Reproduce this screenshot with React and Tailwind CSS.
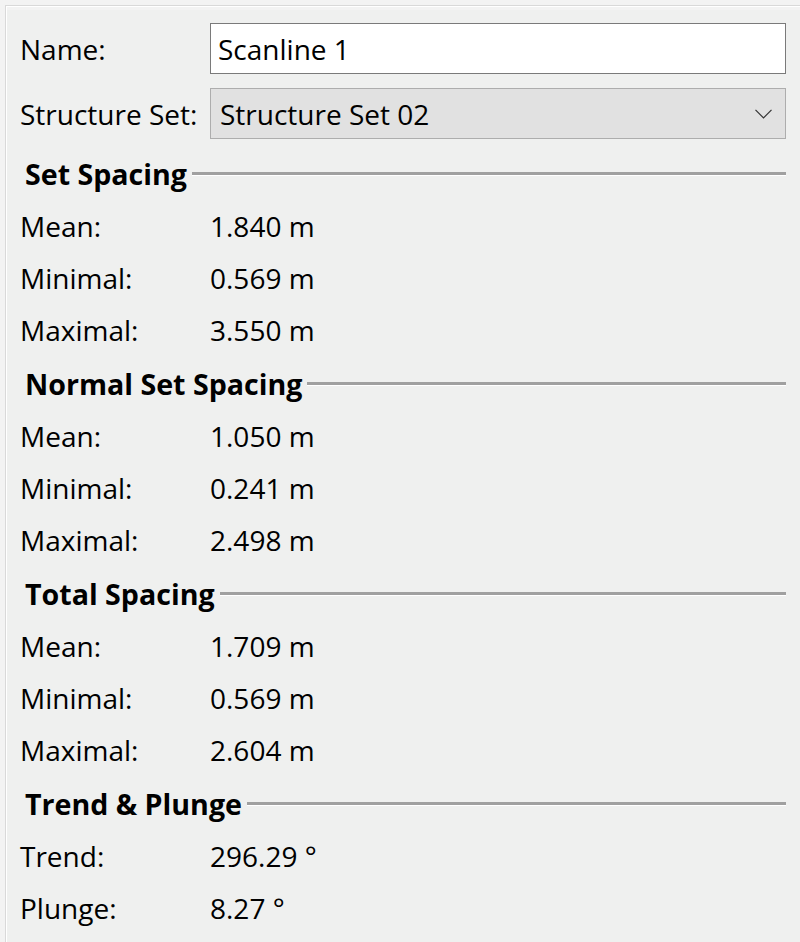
import React from 'react';

const sections = [
  {
    title: 'Set Spacing',
    rows: [
      ['Mean:', '1.840 m'],
      ['Minimal:', '0.569 m'],
      ['Maximal:', '3.550 m'],
    ],
  },
  {
    title: 'Normal Set Spacing',
    rows: [
      ['Mean:', '1.050 m'],
      ['Minimal:', '0.241 m'],
      ['Maximal:', '2.498 m'],
    ],
  },
  {
    title: 'Total Spacing',
    rows: [
      ['Mean:', '1.709 m'],
      ['Minimal:', '0.569 m'],
      ['Maximal:', '2.604 m'],
    ],
  },
  {
    title: 'Trend & Plunge',
    rows: [
      ['Trend:', '296.29 °'],
      ['Plunge:', '8.27 °'],
    ],
  },
];

function Header({ title }) {
  return (
    <div className="flex h-[54px] items-center pb-[2px]">
      <span className="ml-[5px] whitespace-nowrap text-[28.6px] font-bold">{title}</span>
      <div className="ml-[5px] flex flex-1 flex-col">
        <div className="h-[3px] bg-[#a0a0a0]" />
        <div className="h-px bg-white" />
      </div>
    </div>
  );
}

function Row({ label, value }) {
  return (
    <div className="flex h-[52px] items-center pb-[4px]">
      <span className="w-[190px] shrink-0">{label}</span>
      <span>{value}</span>
    </div>
  );
}

export default function App() {
  return (
    <div
      className="h-[942px] w-[800px] overflow-hidden bg-[#f3f3f3] pl-[5px] pt-[5px] text-[28px] leading-none text-black"
      style={{ fontFamily: '"Open Sans", "Noto Sans", sans-serif' }}
    >
      <div className="h-full border-l border-t border-[#d9d9d9]">
        <div className="flex h-full flex-col border-l border-t border-white pt-[3px]">
          <div className="flex-1 bg-[#eff0ef] pl-[13px] pr-[14px] pt-[13px]">
            <div className="flex h-[51px] items-center">
              <span className="w-[190px] shrink-0">Name:</span>
              <div className="flex h-full flex-1 items-center border border-[#7a7a7a] bg-white pl-[7px]">
                Scanline 1
              </div>
            </div>

            <div className="mt-[14px] flex h-[51px] items-center">
              <span className="w-[190px] shrink-0">Structure Set:</span>
              <div className="flex h-full flex-1 items-center justify-between border border-[#adadad] bg-[#e1e1e1] pl-[9px] pr-[13px]">
                <span>Structure Set 02</span>
                <svg width="17" height="10" viewBox="0 0 17 10" fill="none">
                  <path d="M0.5 0.8 L8.5 8.8 L16.5 0.8" stroke="#333" strokeWidth="1.2" />
                </svg>
              </div>
            </div>

            <div className="mt-[9px]">
              {sections.map((s) => (
                <div key={s.title}>
                  <Header title={s.title} />
                  {s.rows.map(([l, v]) => (
                    <Row key={l} label={l} value={v} />
                  ))}
                </div>
              ))}
            </div>
          </div>
        </div>
      </div>
    </div>
  );
}
